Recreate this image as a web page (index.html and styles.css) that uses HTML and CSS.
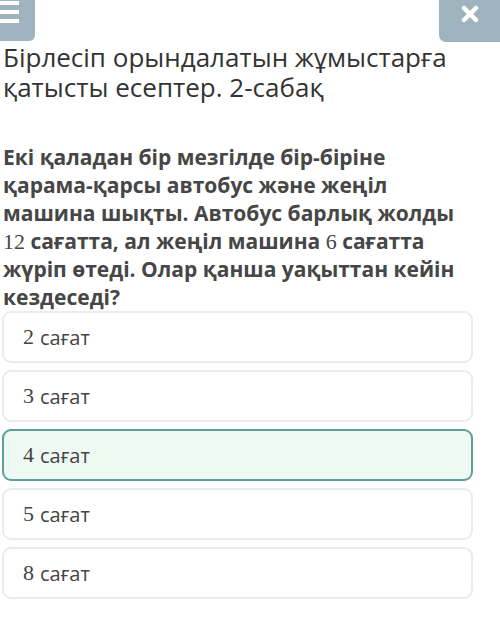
FILE: index.html
```html
<!DOCTYPE html>
<html lang="kk">
<head>
<meta charset="utf-8">
<link rel="stylesheet" href="styles.css">
</head>
<body>
<div class="page">
  <header class="topbar">
    <button class="btn btn-menu" aria-label="menu">
      <svg width="22" height="26" viewBox="0 0 22 26"><rect x="0" y="1" width="19" height="4" fill="#fff"/><rect x="0" y="10" width="19" height="4" fill="#fff"/><rect x="0" y="19" width="19" height="4" fill="#fff"/></svg>
    </button>
    <button class="btn btn-close" aria-label="close">
      <svg width="18" height="18" viewBox="0 0 18 18"><path d="M3 3 L15 15 M15 3 L3 15" stroke="#fff" stroke-width="4.5" stroke-linecap="round"/></svg>
    </button>
  </header>
  <h1 class="title">Бірлесіп орындалатын жұмыстарға қатысты есептер. 2-сабақ</h1>
  <p class="question">Екі қаладан бір мезгілде бір-біріне қарама-қарсы автобус және жеңіл машина шықты. Автобус барлық жолды <span class="num">12</span> сағатта, ал жеңіл машина <span class="num">6</span> сағатта жүріп өтеді. Олар қанша уақыттан кейін кездеседі?</p>
  <div class="options">
    <div class="option"><span class="num">2</span> сағат</div>
    <div class="option"><span class="num">3</span> сағат</div>
    <div class="option option-selected"><span class="num">4</span> сағат</div>
    <div class="option"><span class="num">5</span> сағат</div>
    <div class="option"><span class="num">8</span> сағат</div>
  </div>
</div>
</body>
</html>
```

FILE: styles.css
```css
* { box-sizing: border-box; }
html, body { margin: 0; padding: 0; background: #fff; }
body { font-family: "Open Sans", "Noto Sans", sans-serif; color: #333; width: 500px; height: 635px; overflow: hidden; }
.page { display: flex; flex-direction: column; }
.topbar { display: flex; justify-content: space-between; height: 42px; }
.btn { border: none; padding: 0; margin: 0; background: #9fb3bf; display: flex; align-items: center; justify-content: center; cursor: pointer; }
.btn-menu { width: 35px; height: 41px; border-bottom-right-radius: 6px; justify-content: flex-start; align-items: flex-start; }
.btn-menu svg { display: block; }
.btn-close { width: 61px; height: 42px; border-bottom-left-radius: 7px; padding-bottom: 14px; }
.title { margin: 0 0 0 3px; font-size: 26px; line-height: 30px; font-weight: 400; color: #333; }
.question { margin: 41px 0 0 3px; font-size: 21px; line-height: 28px; font-weight: 700; color: #464646; width: 470px; }
.num { font-family: "Liberation Serif", "DejaVu Serif", serif; font-weight: 400; line-height: 1; font-size: 22px; }
.options { display: flex; flex-direction: column; gap: 7px; margin: 0 0 0 2px; width: 471px; }
.option { height: 52px; border: 2px solid #ebebeb; border-radius: 9px; display: flex; align-items: center; padding-left: 19px; font-size: 20px; color: #444; }
.option .num { font-size: 22px; margin-right: 6px; }
.option-selected { background: #eef9f4; border-color: #5c9f96; }
```
